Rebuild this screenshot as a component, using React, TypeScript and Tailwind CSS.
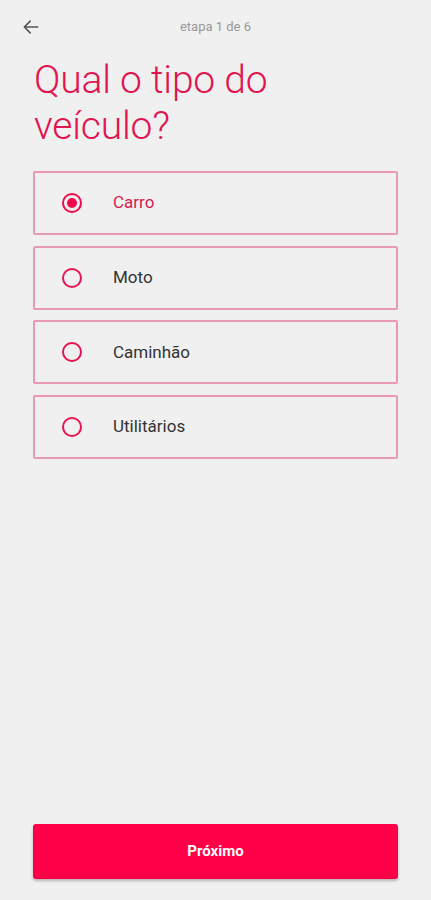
const options = ['Carro', 'Moto', 'Caminhão', 'Utilitários'];

const App = () => {
  const selected = 0;

  return (
    <div
      className="w-[431px] h-[900px] bg-[#f0f0f0] flex flex-col"
      style={{ fontFamily: 'Roboto, "Noto Sans", sans-serif' }}
    >
      <header className="relative h-[54px] flex items-center px-[21px]">
        <svg width="20" height="20" viewBox="0 0 24 24" className="text-[#555]">
          <path
            d="M20 12H4.5M11 5l-7 7 7 7"
            fill="none"
            stroke="currentColor"
            strokeWidth="2"
            strokeLinecap="round"
            strokeLinejoin="round"
          />
        </svg>
        <span className="absolute left-0 right-0 text-center text-[13px] text-[#999] pointer-events-none">
          etapa 1 de 6
        </span>
      </header>

      <h1 className="px-[34px] pt-[3px] text-[39px] leading-[46px] font-light text-[#e0144f] tracking-[-0.2px]">
        Qual o tipo do
        <br />
        veículo?
      </h1>

      <div className="flex flex-col gap-[10.7px] px-[33px] mt-[22px]">
        {options.map((label, i) => (
          <label
            key={label}
            className="h-[64px] flex items-center border-2 border-[#e99ab0] rounded-[2px] pl-[27px]"
          >
            <span
              className={
                i === selected
                  ? 'w-[20px] h-[20px] rounded-full border-2 border-[#f0094a] flex items-center justify-center'
                  : 'w-[20px] h-[20px] rounded-full border-2 border-[#e8134f]'
              }
            >
              {i === selected && <span className="w-[10px] h-[10px] rounded-full bg-[#f0094a]" />}
            </span>
            <span
              className={
                i === selected
                  ? 'ml-[31px] text-[17px] text-[#d81b52]'
                  : 'ml-[31px] text-[17px] text-[#333]'
              }
            >
              {label}
            </span>
          </label>
        ))}
      </div>

      <div className="flex-1" />

      <div className="px-[33px] pb-[21px]">
        <button className="w-full h-[55px] rounded-[3px] bg-[#ff0048] text-white font-bold text-[15px] shadow-[0_2px_3px_rgba(0,0,0,0.25)]">
          Próximo
        </button>
      </div>
    </div>
  );
};

export default App;
